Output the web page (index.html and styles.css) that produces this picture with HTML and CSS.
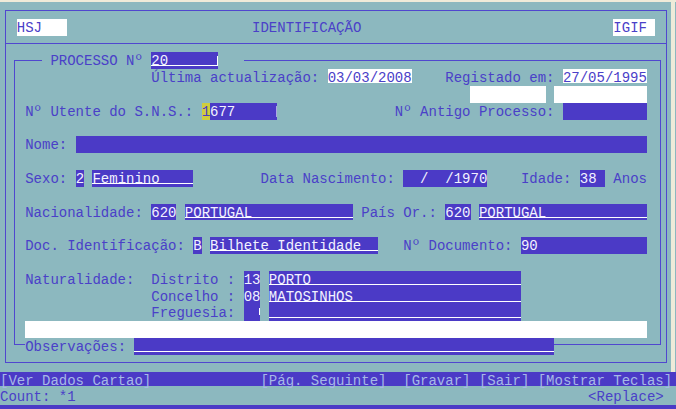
FILE: index.html
```html
<!DOCTYPE html>
<html lang="pt">
<head>
<meta charset="utf-8">
<title>IDENTIFICAÇÃO</title>
<link rel="stylesheet" href="styles.css">
</head>
<body>
<div class="screen">
  <div class="frames">
    <div class="box outer"></div>
    <div class="box head"></div>
    <div class="box inner"></div>
    <div class="edge"></div>
  </div>
  <div class="lines">
    <div class="ln"></div>
    <div class="ln">  <span class="f w">HSJ   </span>                      IDENTIFICAÇÃO                              <span class="f w">IGIF </span></div>
    <div class="ln"></div>
    <div class="ln">     <span class="cv"> PROCESSO Nº </span><span class="f u">20     <span class="tick"></span></span><span class="cv">   </span></div>
    <div class="ln">                  Última actualização: <span class="f w d">03/03/2008</span>    Registado em: <span class="f w d">27/05/1995</span></div>
    <div class="ln">                                                        <span class="f w c9"></span> <span class="f w c11"></span></div>
    <div class="ln">   Nº Utente do S.N.S.: <span class="f"><span class="cur">1</span>677    <span class="tick dim"></span></span>              Nº Antigo Processo: <span class="f c10"></span></div>
    <div class="ln"></div>
    <div class="ln">   Nome: <span class="f c68"></span></div>
    <div class="ln"></div>
    <div class="ln">   Sexo: <span class="f">2</span> <span class="f u">Feminino    </span>        Data Nascimento: <span class="f">  /  /1970</span>    Idade: <span class="f">38 </span> Anos</div>
    <div class="ln"></div>
    <div class="ln">   Nacionalidade: <span class="f">620</span> <span class="f u">PORTUGAL            </span> País Or.: <span class="f">620</span> <span class="f u">PORTUGAL            </span></div>
    <div class="ln"></div>
    <div class="ln">   Doc. Identificação: <span class="f">B</span> <span class="f u">Bilhete Identidade  </span>   Nº Documento: <span class="f">90             </span></div>
    <div class="ln"></div>
    <div class="ln">   Naturalidade:  Distrito : <span class="f">13</span> <span class="f u">PORTO                         </span></div>
    <div class="ln">                  Concelho : <span class="f">08</span> <span class="f u">MATOSINHOS                    </span></div>
    <div class="ln">                  Freguesia: <span class="f"> <span class="tick low"></span></span> <span class="f u c30"></span></div>
    <div class="ln">   <span class="f w c74"></span></div>
    <div class="ln">   <span class="cv">Observações: </span><span class="f u c50"></span></div>
    <div class="ln"></div>
    <div class="ln status">[Ver Dados Cartao]             [Pág. Seguinte]  [Gravar] [Sair] [Mostrar Teclas]</div>
    <div class="ln">Count: *1                                                             &lt;Replace&gt;</div>
    <div class="ln bottom"></div>
  </div>
</div>
</body>
</html>
```
FILE: styles.css
```css
* { box-sizing: border-box; }

body {
  margin: 0;
  background: #efebd9;
  overflow: hidden;
}

.screen {
  display: grid;
  width: 676px;
  height: 407px;
  margin-top: 2px;
  background: #8cb8bf;
  overflow: hidden;
  font-family: "Liberation Mono", monospace;
  font-size: 14px;
  color: #4a40c8;
}

.frames,
.lines {
  grid-area: 1 / 1;
}

/* character-cell grid used for the box frames */
.frames {
  display: grid;
  grid-template-columns: repeat(80, 8.4px) 4px;
  grid-template-rows: repeat(22, 16.8px) 1fr;
}

.box {
  border: 1px solid #5047cf;
}

.outer {
  grid-column: 1 / 81;
  grid-row: 1 / 23;
  margin: 8px 4px 8.6px 5px;
}

.head {
  grid-column: 1 / 81;
  grid-row: 1 / 4;
  margin: 8px 4px 8.4px 5px;
  border-width: 0 0 1px 0;
}

.inner {
  grid-column: 2 / 80;
  grid-row: 4 / 22;
  margin: 8.1px 2.1px 9.6px 5.6px;
}

.edge {
  grid-column: 81;
  grid-row: 1 / 23;
  background: #efebd9;
}

/* text rows */
.lines {
  display: flex;
  flex-direction: column;
}

.ln {
  flex: none;
  height: 16.8px;
  line-height: 18.4px;
  white-space: pre;
}

.f {
  display: inline-block;
  vertical-align: top;
  height: 16.8px;
  background: #4b3ac6;
  color: #f2f2ff;
}

.u {
  background: linear-gradient(#4b3ac6 0 13.4px, #ffffff 13.4px 14.5px, #4b3ac6 14.5px);
}

.w {
  background: #ffffff;
  color: #4a40c8;
}

.d {
  height: 14.2px;
}

.cv {
  display: inline-block;
  vertical-align: top;
  height: 16.8px;
  background: #8cb8bf;
}

.cur {
  display: inline-block;
  vertical-align: top;
  height: 16.8px;
  background: #cfcd3c;
  color: #4b3ac6;
}

.tick {
  display: inline-block;
  vertical-align: top;
  width: 8.4px;
  height: 16.8px;
  background: linear-gradient(to right, transparent 6.6px, #ffffff 6.6px 7.8px, transparent 7.8px) 0 4px / 100% 9px no-repeat;
}

.tick.dim {
  background: linear-gradient(to right, transparent 7px, rgba(255, 255, 255, 0.55) 7px 8px, transparent 8px) 0 3px / 100% 11px no-repeat;
}

.tick.low {
  background-position: 0 4px;
  background-size: 100% 7px;
}

.c9 { width: 75.6px; }
.c10 { width: 84px; }
.c11 { width: 92.4px; }
.c30 { width: 252px; }
.c50 { width: 420px; }
.c68 { width: 571.2px; }
.c74 { width: 621.6px; }

.status {
  background: linear-gradient(#4b3ac6 0 14px, transparent 14px);
  color: #a6b8e6;
}

.bottom {
  flex: 1;
  background: #4b3ac6;
}
```
